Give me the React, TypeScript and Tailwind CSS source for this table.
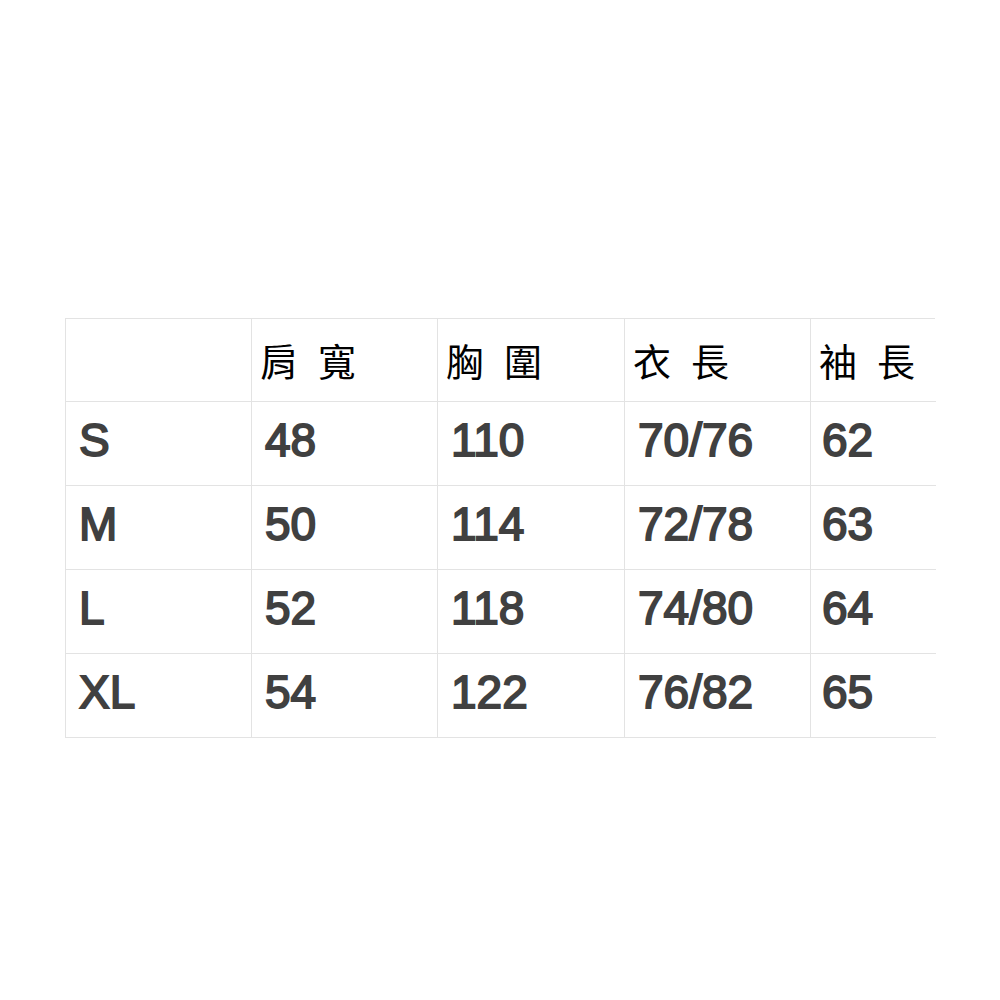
import React from 'react'

const headers = [[], ['肩', '寬'], ['胸', '圍'], ['衣', '長'], ['袖', '長']]

const rows = [
  ['S', '48', '110', '70/76', '62'],
  ['M', '50', '114', '72/78', '63'],
  ['L', '52', '118', '74/80', '64'],
  ['XL', '54', '122', '76/82', '65']
]

const App: React.FC = () => {
  return (
    <div className="w-[1000px] h-[1000px] bg-white pt-[318px] pl-[65px]">
      <div className="grid grid-cols-[186px_186px_187px_186px_125px] w-[870px] border-t border-l border-[#e3e3e3]">
        {headers.map((h, i) => (
          <div
            key={`h-${i}`}
            className={`h-[83px] border-b border-[#e3e3e3] flex items-center gap-[20px] pl-[8px] pb-[2px] text-[38px] text-black ${i < 4 ? 'border-r' : ''}`}
            style={{ fontFamily: '"Noto Sans CJK TC", "Noto Sans CJK SC", sans-serif' }}
          >
            {h.map((ch, j) => (
              <span key={j}>{ch}</span>
            ))}
          </div>
        ))}
        {rows.map((row, r) =>
          row.map((cell, c) => (
            <div
              key={`c-${r}-${c}`}
              className={`h-[84px] border-b border-[#e3e3e3] flex items-center pb-[6px] text-[46px] text-[#404040] [-webkit-text-stroke:1.8px_#404040] ${c < 4 ? 'border-r' : ''} ${c === 4 ? 'pl-[11px]' : 'pl-[13px]'}`}
              style={{ fontFamily: '"Liberation Sans", Arial, sans-serif' }}
            >
              {cell}
            </div>
          ))
        )}
      </div>
    </div>
  )
}

export default App
